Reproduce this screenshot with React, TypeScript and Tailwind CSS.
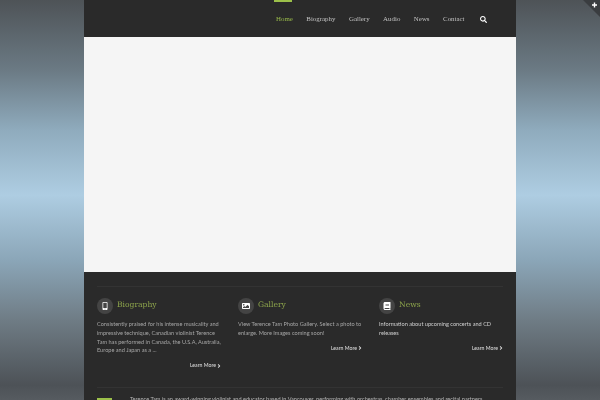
import React from "react";
import { FaSearch, FaMobileAlt, FaImage, FaBook, FaAngleRight } from "react-icons/fa";

const navItems = ["Biography", "Gallery", "Audio", "News", "Contact"];

const cards = [
  {
    title: "Biography",
    icon: <FaMobileAlt className="text-[8px] text-white" />,
    text: "Consistently praised for his intense musicality and impressive technique, Canadian violinist Terence Tam has performed in Canada, the U.S.A, Australia, Europe and Japan as a ...",
    textClass: "text-[#a6a6a6]",
  },
  {
    title: "Gallery",
    icon: <FaImage className="text-[8px] text-white" />,
    text: "View Terence Tam Photo Gallery. Select a photo to enlarge. More Images coming soon!",
    textClass: "text-[#a6a6a6]",
  },
  {
    title: "News",
    icon: <FaBook className="text-[8px] text-white" />,
    text: "Information about upcoming concerts and CD releases",
    textClass: "text-[#d0d0d0]",
  },
];

const App: React.FC = () => {
  return (
    <div className="relative h-[400px] w-[600px] overflow-hidden bg-[linear-gradient(to_bottom,#4e5357_0px,#6b7a84_70px,#8fabbd_130px,#aecde2_195px,#8ba6b8_260px,#6f7c85_320px,#4d5257_385px,#565b60_400px)] font-['Lato',sans-serif]">
      {/* corner ribbon */}
      <div className="absolute right-0 top-0">
        <svg width="17" height="17" viewBox="0 0 17 17">
          <path d="M0 0H17V17Z" fill="#3a3d40" />
          <path d="M9 5h5M11.5 2.5v5" stroke="#fff" strokeWidth="1.4" />
        </svg>
      </div>

      <div className="mx-auto flex h-full w-[432px] flex-col">
        {/* Header */}
        <header className="relative flex h-[37px] shrink-0 items-center bg-[#2a2a2a] pl-[192px] pt-[1px]">
          <div className="absolute left-[190px] top-0 h-[2px] w-[18px] bg-[#9cc04a]" />
          <nav className="flex items-center gap-[13.5px] font-['Liberation_Serif',serif] text-[6.9px] text-[#c0c0c0] will-change-transform">
            <span className="text-[#97b84a]">Home</span>
            {navItems.map((item) => (
              <span key={item}>{item}</span>
            ))}
            <FaSearch className="ml-[2px] text-[7px] text-white" />
          </nav>
        </header>

        {/* Slider area */}
        <div className="h-[235px] shrink-0 bg-[#f5f5f5]" />

        {/* Content */}
        <div className="flex-1 bg-[#2a2a2a] px-[13px] pt-[14px]">
          <div className="border-t border-[#333333] pt-[11px]">
            <div className="grid h-[89px] grid-cols-3 gap-[17px] will-change-transform">
              {cards.map((card) => (
                <div key={card.title} className="flex flex-col">
                  <div className="flex items-center gap-[4px]">
                    <div className="flex h-[16px] w-[16px] items-center justify-center rounded-full bg-[#444444]">
                      {card.icon}
                    </div>
                    <h3 className="-mt-[3px] font-['DejaVu_Serif',serif] text-[7.6px] text-[#8ea64c]">
                      {card.title}
                    </h3>
                  </div>
                  <p className={`mt-[6px] text-[5.6px] leading-[8.8px] ${card.textClass}`}>
                    {card.text}
                  </p>
                  <div className="mt-[6px] flex items-center justify-end text-[5.2px] leading-[9px] text-[#e0e0e0]">
                    Learn More <FaAngleRight className="-mr-[1px] text-[6px]" />
                  </div>
                </div>
              ))}
            </div>
            <div className="border-t border-[#333333] pt-[10px]">
              <div className="flex items-start gap-[18px]">
                <div className="h-[10px] w-[15px] shrink-0 bg-[#9cc04a]" />
                <p className="-mt-[3px] whitespace-nowrap text-[5.6px] leading-[8px] text-[#b4b4b4] will-change-transform">
                  Terence Tam is an award-winning violinist and educator based in Vancouver, performing with orchestras, chamber ensembles and recital partners
                </p>
              </div>
            </div>
          </div>
        </div>
      </div>
    </div>
  );
};

export default App;
